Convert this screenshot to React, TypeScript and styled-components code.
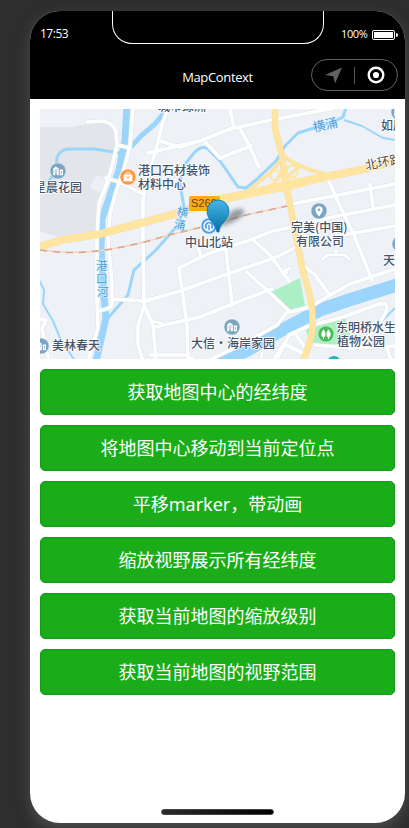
import React from 'react';
import styled, { createGlobalStyle } from 'styled-components';

const GlobalStyle = createGlobalStyle`
  * { box-sizing: border-box; }
  html, body { margin: 0; height: 100%; overflow: hidden; background: #2e2e2e; }
`;

const Stage = styled.main`
  width: 409px;
  height: 828px;
  padding: 11px 0 0 30px;
  overflow: hidden;
  background: #2e2e2e;
  font-family: 'Noto Sans', 'Noto Sans CJK SC', sans-serif;
`;

const Phone = styled.section`
  display: flex;
  flex-direction: column;
  width: 375px;
  height: 812px;
  border-radius: 30px;
  overflow: hidden;
  background: #fff;
  box-shadow: 0 6px 14px 0 rgba(110, 110, 110, 0.5);
`;

const Header = styled.header`
  flex: none;
  height: 88px;
  color: #fff;
  background: #000;
`;

const StatusBar = styled.div`
  display: grid;
  grid-template-columns: 82px 212px 1fr;
  height: 44px;
`;

const Clock = styled.time`
  padding: 14px 0 0 10px;
  font-family: 'Open Sans', sans-serif;
  font-size: 12px;
  letter-spacing: -0.5px;
  line-height: 17px;
`;

const Notch = styled.div`
  height: 33px;
  border: 1px solid #fff;
  border-top: 0;
  border-radius: 0 0 20px 20px;
`;

const Power = styled.div`
  display: flex;
  align-items: center;
  gap: 5px;
  height: 16px;
  margin-top: 16px;
  padding-left: 17px;
  font-family: 'Open Sans', sans-serif;
  font-size: 11px;
`;

const Percent = styled.span`
  width: 26px;
  height: 16px;
  line-height: 14px;
  letter-spacing: -0.4px;
`;

const NavBar = styled.div`
  display: grid;
  grid-template-columns: 1fr 87px;
  height: 44px;
  padding: 4px 7px 0 94px;
`;

const Title = styled.h1`
  margin: 0;
  width: 187px;
  text-align: center;
  font-family: 'Open Sans', sans-serif;
  font-size: 13px;
  font-weight: 400;
  letter-spacing: -0.35px;
  line-height: 37px;
`;

const Capsule = styled.div`
  display: flex;
  align-items: center;
  justify-content: space-between;
  height: 32px;
  padding: 0 12px 0 13px;
  border: 1px solid #606060;
  border-radius: 16px;
`;

const Divider = styled.span`
  width: 1px;
  height: 17px;
  margin-right: 1px;
  background: #555;
`;

const Content = styled.div`
  flex: 1;
  display: flex;
  flex-direction: column;
  gap: 10px;
  padding: 10px;
`;

const MapView = styled.svg`
  display: block;
  flex: none;
  width: 355px;
  height: 250px;
  font-family: 'Noto Sans CJK SC', sans-serif;
  font-size: 12px;
`;

const Action = styled.button`
  flex: none;
  height: 46px;
  padding: 0;
  border: 1px solid #18991a;
  border-radius: 5px;
  background: #1aad19;
  color: #fff;
  font-family: 'Noto Sans', 'Noto Sans CJK SC', sans-serif;
  font-size: 18px;
  line-height: 44px;
`;

const HomeArea = styled.footer`
  display: flex;
  justify-content: center;
  height: 14px;
  flex: none;
`;

const HomeIndicator = styled.span`
  width: 113px;
  height: 6px;
  border-radius: 3px;
  border: 1px solid #444;
  background: linear-gradient(90deg, #2c2c2c, #000);
`;

const minorRoads = [
  'M87 122L102 121Q113 122 116 132L117 145L113 162L108 180L99 203L97 235L97 300L98 328L88 361',
  'M133 105L130 146L124 169L116 192L110 214L108 240L112 282L112 305Q110 309 98 311',
  'M117 145L130 148',
  'M106 178L119 182L143 194',
  'M169 105L162 125L156 150L147 180L143 200L143 235L144 305L153 325L156 361',
  'M144 306L138 325L138 345L143 361',
  'M143 301L112 299',
  'M143 302L180 291L230 273L277 257L296 247',
  'M148 153L200 141L230 129L271 120L335 108',
  'M160 141L180 147L195 142',
  'M206 143L220 158L251 146',
  'M229 105L234 128',
  'M239 127L248 143L259 167',
  'M292 204L395 184',
  'M295 226L333 217L395 205',
  'M327 177L339 204L354 235L372 280',
  'M370 184L373 208',
  'M179 268L210 253L250 240L273 231L293 227',
  'M179 268L187 325L188 361',
  'M226 250L232 304',
  'M198 246L201 257',
  'M155 327L200 317L240 301L272 289',
  'M253 240L270 255L289 281',
  'M247 272L268 291L289 311',
  'M150 355L185 355L196 361',
  'M205 362L245 343L277 325L286 313L310 307L330 295L350 284L395 269',
  'M301 263L315 275L329 294',
  'M297 245L337 236L395 226',
  'M278 357L289 335L311 325',
  'M273 361L284 344L305 354',
  'M313 325L343 317L379 304Q389 301 386 312L376 329L363 342',
  'M315 345L350 348L395 346',
  'M296 335L304 346',
  'M387 347L391 361',
  'M40 319L46 320L42 329L49 361',
];

const laneRoads = [
  'M323 259L327 255H345L349 259M336 255V251',
  'M284 272L290 268M285 269L287 273',
  'M261 361L262 353',
  'M145 300L162 296',
  'M144 306L150 321L162 323',
];

const rivers: [string, number][] = [
  ['M127 105L125 140L119 170L110 195L102 219L101 245L103 287L106 318L96 361', 7],
  ['M125 153L142 135L155 124L167 109', 5],
  ['M48 183L56 170L57 157Q61 149 69 149L95 149L120 153', 3],
  ['M207 148Q200 146 194 153L182 168L180 185L184 207L178 225L155 251L134 270L128 295L108 318', 3],
  ['M207 148L220 161L238 187L246 188L257 179L276 161L285 146L298 133L317 127L335 121L343 117L347 105', 3],
  ['M344 120L362 126L383 138L395 140', 2],
  ['M36 274L44 290L43 304L53 321L60 338L75 361', 2],
  ['M214 368L253 347L282 330L320 310L349 300L400 284', 13],
  ['M376 327L395 308', 2],
];

const highways: [string, number][] = [
  ['M36 248L62 240L100 234L130 226L175 214L220 199L260 191L287 185L330 176L365 169L400 160', 7],
  ['M275 105L275 128L282 156L287 190L292 215L302 267L310 296Q315 322 311 338L303 362', 5.6],
  ['M249 190L271 172L280 161', 2.5],
  ['M283 156L294 163L313 171L326 174', 3],
  ['M283 160L281 172Q276 185 264 190', 2],
  ['M286 178L295 170L301 166', 2],
];

type PoiKind = 'building' | 'shop' | 'pin' | 'park' | 'metro';
const poiColor: Record<PoiKind, string> = {
  building: '#7ba5c1', shop: '#ff9b45', pin: '#7ba5c1', park: '#4dbd5b', metro: '#4b9fee',
};

function Poi({ x, y, kind }: { x: number; y: number; kind: PoiKind }) {
  return (
    <g transform={`translate(${x} ${y})`}>
      <circle r="8" fill={poiColor[kind]} stroke="#fff" strokeOpacity=".7" strokeWidth=".6" />
      {kind === 'building' && (
        <g>
          <path d="M-4.8 4.2V-2.2L-2.2-4.4L.8-2.2V4.2H-1.2V2.2H-2.8V4.2ZM1.8-1.4H5V4.2H1.8Z" fill="#fff" />
          <path d="M-3.6-1H-.4M-3.6 .9H-.4M3.4 0V3" stroke="#7ba5c1" strokeWidth=".8" />
        </g>
      )}
      {kind === 'shop' && (
        <g>
          <path d="M-4.3-2.4H4.3V4.3H-4.3Z" fill="#fff" />
          <path d="M-2-2Q-2-5 0-5T2-2" fill="none" stroke="#fff" />
          <path d="M-2-.8Q0 2.4 2-.8" fill="none" stroke="#ff9b45" />
        </g>
      )}
      {kind === 'pin' && (
        <g>
          <path d="M0 5.5C-2 3-3.6 1-3.6-1.2A3.6 3.6 0 0 1 3.6-1.2C3.6 1 2 3 0 5.5Z" fill="#fff" />
          <circle cy="-1.2" r="1.3" fill="#7ba5c1" />
        </g>
      )}
      {kind === 'park' && (
        <g>
          <path d="M-2.5-4.5C-5-2-5.6 3-2.5 3.5C.4 3 0-2-2.5-4.5ZM2.5-4.5C0-2-.4 3 2.5 3.5C5.6 3 5-2 2.5-4.5Z" fill="#fff" />
          <path d="M-2.5 2V5M2.5 2V5" stroke="#fff" />
        </g>
      )}
      {kind === 'metro' && (
        <g fill="none" stroke="#fff" strokeWidth="1.4">
          <circle r="5" />
          <path d="M-3.2 3.4H-1.5V-.8Q0-3.4 1.5-.8V3.4H3.2" />
        </g>
      )}
    </g>
  );
}

const labels: [string, number, number][] = [
  ['城市绿洲', 158, 111],
  ['星晨花园', 34, 192],
  ['港口石材装饰', 138, 175],
  ['材料中心', 138, 189],
  ['中山北站', 185, 247],
  ['完美(中国)', 291, 232],
  ['有限公司', 296, 246],
  ['如辰', 381, 130],
  ['天悦', 383, 265],
  ['美林春天', 52, 350],
  ['东明桥水生', 336, 332],
  ['植物公园', 337, 346],
];

function CityMap() {
  return (
    <MapView viewBox="40 109 355 250" role="img" aria-label="map">
      <defs>
        <linearGradient id="drop" x2="0" y2="1">
          <stop stopColor="#45b5e5" />
          <stop offset="1" stopColor="#0670a8" />
        </linearGradient>
        <filter id="soft" x="-50%" y="-50%" width="200%" height="200%">
          <feGaussianBlur stdDeviation="2" />
        </filter>
      </defs>
      <path d="M40 109H395V359H40Z" fill="#eef2f7" />
      <path d="M40 127L73 127L108 120L117 132L112 166L108 180L98 204L96 234L64 239L52 235L40 231Z" fill="#e2e5ea" />
      <path d="M96 175L107 178L103 193L90 188Z" fill="#eceff5" />
      <path d="M271 292L300 278L305 306L289 310L281 301Z" fill="#adefc5" />
      <path d="M305 329L345 318L352 343L316 345L310 339Z" fill="#adefc5" />
      <g fill="none" stroke="#9bd5fb" strokeLinejoin="round">
        {rivers.map(([d, w]) => <path key={d} d={d} strokeWidth={w} />)}
      </g>
      <g fill="none" strokeLinecap="round" strokeLinejoin="round">
        <g stroke="#dde2e8" strokeWidth="4.6">{minorRoads.map((d) => <path key={d} d={d} />)}</g>
        <g stroke="#dde2e8" strokeWidth="3.4">{laneRoads.map((d) => <path key={d} d={d} />)}</g>
        <g stroke="#fff" strokeWidth="3.6">{minorRoads.map((d) => <path key={d} d={d} />)}</g>
        <g stroke="#fff" strokeWidth="2.5">{laneRoads.map((d) => <path key={d} d={d} />)}</g>
        <g stroke="#f1dc9c">{highways.map(([d, w]) => <path key={d} d={d} strokeWidth={w + 0.8} />)}</g>
        <g stroke="#ffe5a0">{highways.map(([d, w]) => <path key={d} d={d} strokeWidth={w} />)}</g>
      </g>
      <path d="M215 201L262 186L286 181L318 174L330 175L328 180L290 190L262 195L216 205Z" fill="#ffe5a0" />
      <g fill="none" stroke="#ffe5a0" strokeWidth="2">
        <circle cx="275.5" cy="175.5" r="5" />
        <circle cx="292" cy="171.5" r="6" />
      </g>
      <g fill="none" strokeWidth="1.5">
        <path d="M40 250Q72 255 105 250Q138 245 165 236L206 226L246 215L287 206" stroke="#f3d5c5" />
        <path d="M40 250Q72 255 105 250Q138 245 165 236L206 226L246 215L287 206" stroke="#dca581" strokeDasharray="7 6" />
      </g>
      <rect x="189" y="196" width="31" height="15" rx="2" fill="#ffaa17" />
      <text x="191" y="207" fontFamily="Liberation Sans" fontSize="11" fill="#604715">S266</text>
      <Poi x={58} y={171} kind="building" />
      <Poi x={128} y={177} kind="shop" />
      <Poi x={209} y={226} kind="metro" />
      <Poi x={319} y={211} kind="pin" />
      <Poi x={41} y={346} kind="building" />
      <Poi x={232} y={327} kind="building" />
      <Poi x={326} y={334} kind="park" />
      <Poi x={399} y={112} kind="building" />
      <Poi x={400} y={244} kind="building" />
      <circle cx="334" cy="363" r="7" fill="#20b5b5" />
      <g fill="#42526b" fontWeight="500" stroke="#fff" strokeWidth="1.6" strokeLinejoin="round" paintOrder="stroke">
        {labels.map(([t, x, y]) => <text key={t} x={x} y={y}>{t}</text>)}
        <text x="191" y="348">大信・海岸家园</text>
      </g>
      <g fill="#459dd8" fontSize="11.5" stroke="#e5f3ff" strokeWidth="1" paintOrder="stroke">
        <text><tspan x="96" y="270">港</tspan><tspan x="96" y="283">口</tspan><tspan x="97" y="296">河</tspan></text>
        <text transform="translate(176 215) rotate(12)"><tspan x="0" y="0">横</tspan><tspan x="0" y="13">涌</tspan></text>
        <text transform="translate(314 132) rotate(-13)" fontSize="12.5">横涌</text>
      </g>
      <text transform="translate(366 170) rotate(-11)" fill="#574d45" stroke="#fff" strokeWidth="1.2" paintOrder="stroke" fontSize="12.5">北环路</text>
      <path d="M219 226L232 211Q244 206 244 212Q243 219 220 227Z" fill="#59616a" opacity=".6" filter="url(#soft)" />
      <path d="M217 232C216 224 207 220 207 211A11 11 0 0 1 229 211C229 220 219 224 219 232Z" fill="url(#drop)" stroke="#0879ad" strokeWidth=".8" />
    </MapView>
  );
}

const actions = [
  '获取地图中心的经纬度',
  '将地图中心移动到当前定位点',
  '平移marker，带动画',
  '缩放视野展示所有经纬度',
  '获取当前地图的缩放级别',
  '获取当前地图的视野范围',
];

export default function App() {
  return (
    <>
      <GlobalStyle />
      <Stage>
        <Phone>
          <Header>
            <StatusBar>
              <Clock>17:53</Clock>
              <Notch />
              <Power>
                <Percent>100%</Percent>
                <svg width="27" height="10" viewBox="0 0 27 10">
                  <rect x=".5" y=".5" width="22" height="9" rx="1.5" fill="none" stroke="#fff" />
                  <rect x="2" y="2" width="19" height="6" fill="#fff" />
                  <path d="M24 3Q26 3 26 5T24 7Z" fill="#fff" />
                </svg>
              </Power>
            </StatusBar>
            <NavBar>
              <Title>MapContext</Title>
              <Capsule>
                <svg width="17" height="17" viewBox="0 0 17 17">
                  <path d="M17 .5L0 8L8.3 9.3L10 16.5Z" fill="#606060" />
                </svg>
                <Divider />
                <svg width="18" height="18" viewBox="0 0 18 18">
                  <circle cx="9" cy="9" r="7.3" fill="none" stroke="#fff" strokeWidth="2.4" />
                  <circle cx="9" cy="9" r="3.1" fill="#fff" />
                </svg>
              </Capsule>
            </NavBar>
          </Header>
          <Content>
            <CityMap />
            {actions.map((label) => <Action key={label}>{label}</Action>)}
          </Content>
          <HomeArea><HomeIndicator /></HomeArea>
        </Phone>
      </Stage>
    </>
  );
}
